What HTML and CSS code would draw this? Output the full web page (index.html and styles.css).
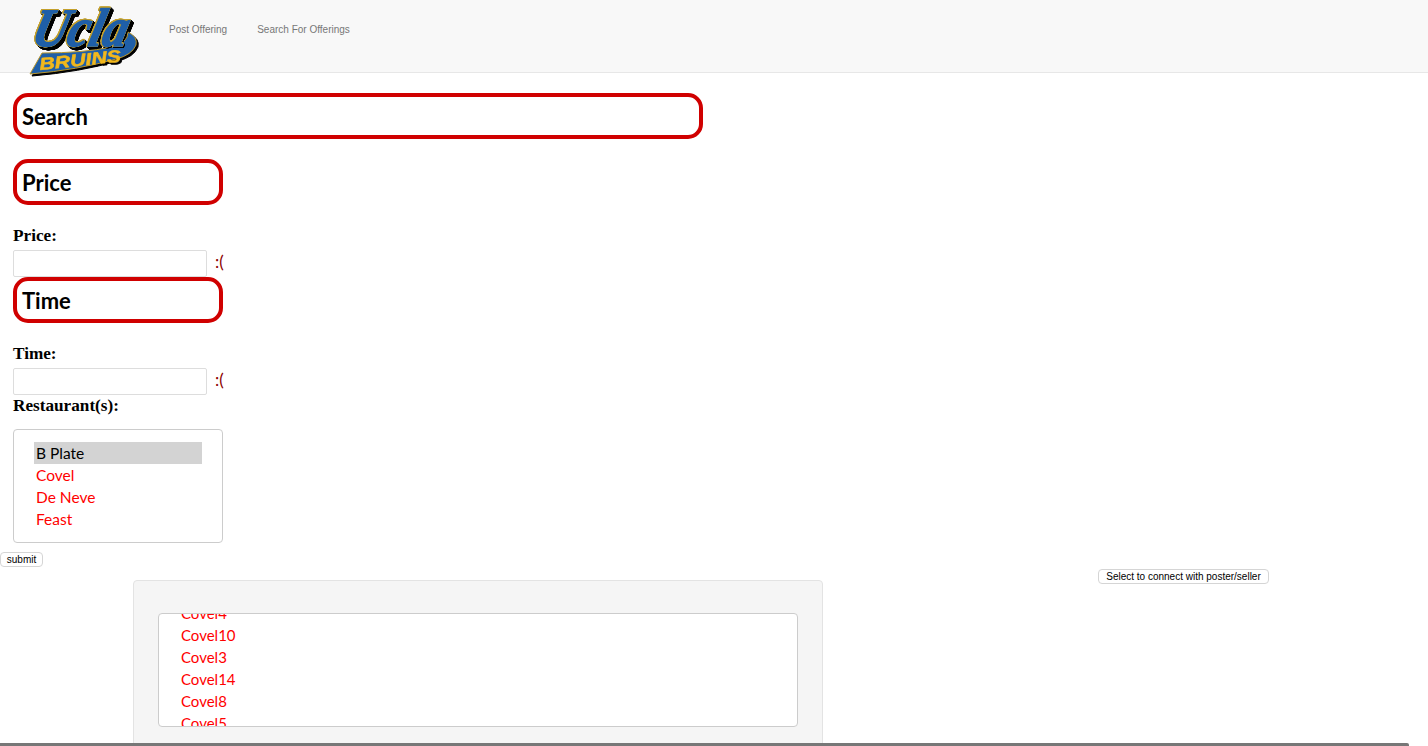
FILE: index.html
```html
<!DOCTYPE html>
<html lang="en">
<head>
<meta charset="utf-8">
<title>Search For Offerings</title>
<link rel="stylesheet" href="styles.css">
</head>
<body>
<nav class="navbar">
  <svg class="logo" viewBox="0 0 112 72" width="112" height="72" aria-label="UCLA Bruins logo">
    <g class="logo-group">
      <path class="swoosh" d="M2 69 L14 48 Q55 48 84 42 Q100 38 100 27 Q110 32 108 40 Q104 50 88 54 Q50 65 2 69 Z"/>
      <text class="logo-bruins" x="12" y="65" transform="rotate(-6 12 65)" textLength="82" lengthAdjust="spacingAndGlyphs">BRUINS</text>
      <g class="logo-script-group">
        <text class="logo-script" x="12" y="41" transform="skewX(-14)" textLength="95" lengthAdjust="spacingAndGlyphs">Ucla</text>
      </g>
    </g>
  </svg>
  <a class="nav-link" href="#">Post Offering</a>
  <a class="nav-link" href="#">Search For Offerings</a>
</nav>

<main class="content">
  <h2 class="title-box title-wide">Search</h2>
  <h3 class="title-box title-narrow">Price</h3>
  <label class="field-label label-price">Price:</label>
  <div class="field-row">
    <input class="text-input" type="text">
    <span class="sad">:(</span>
  </div>
  <h3 class="title-box title-narrow title-time">Time</h3>
  <label class="field-label label-price">Time:</label>
  <div class="field-row">
    <input class="text-input" type="text">
    <span class="sad">:(</span>
  </div>
  <label class="field-label label-rest">Restaurant(s):</label>
  <ul class="list-box restaurants">
    <li class="selected">B Plate</li>
    <li>Covel</li>
    <li>De Neve</li>
    <li>Feast</li>
  </ul>
</main>
<button class="btn btn-submit" type="button">submit</button>

<section class="results">
  <div class="panel">
    <div class="list-box offerings">
      <ul class="offerings-list">
        <li>Covel4</li>
        <li>Covel10</li>
        <li>Covel3</li>
        <li>Covel14</li>
        <li>Covel8</li>
        <li>Covel5</li>
      </ul>
    </div>
  </div>
  <button class="btn btn-connect" type="button">Select to connect with poster/seller</button>
</section>
<div class="h-scrollbar"></div>
</body>
</html>
```
FILE: styles.css
```css
* { box-sizing: border-box; }
html, body { height: 746px; overflow: hidden; }
body {
  margin: 0;
  background: #fff;
  color: #000;
  font-family: "Liberation Serif", "Times New Roman", serif;
}
.navbar {
  display: flex;
  align-items: flex-start;
  height: 73px;
  padding-left: 28px;
  background: #f8f8f8;
  border-bottom: 1px solid #e7e7e7;
}
.logo {
  flex: none;
  margin-top: 5px;
  margin-right: 29px;
  overflow: visible;
}
.logo-group { filter: drop-shadow(2px 2px 0 #000); }
.logo-script-group {
  filter: drop-shadow(0.8px 0 0 #c4a02c) drop-shadow(-0.8px 0 0 #c4a02c) drop-shadow(0 0.8px 0 #c4a02c) drop-shadow(0 -0.8px 0 #c4a02c) drop-shadow(1.5px 1.5px 0 #000);
}
.swoosh { fill: #1f5fa8; stroke: #b8962e; stroke-width: 1; }
.logo-script {
  font-family: "Liberation Serif", serif;
  font-style: italic;
  font-weight: 700;
  font-size: 54px;
  fill: #1f5fa8;
  stroke: #1f5fa8;
  stroke-width: 1.5;
}
.logo-bruins {
  font-family: "Liberation Sans", sans-serif;
  font-style: italic;
  font-weight: 700;
  font-size: 17px;
  fill: #f2b81c;
  stroke: #f2b81c;
  stroke-width: 0.5;
}
.nav-link {
  margin-top: 23px;
  margin-right: 30px;
  font: 10px/14px "Liberation Sans", Arial, sans-serif;
  color: #777;
  text-decoration: none;
}
.content {
  padding: 20px 0 0 13px;
}
.title-box {
  display: flex;
  align-items: center;
  height: 46px;
  margin: 0;
  padding-left: 5px;
  border: 4px solid #d00000;
  border-radius: 15px;
  font-family: "Lato", "Noto Sans", sans-serif;
  font-weight: 700;
  font-size: 22px;
  color: #000;
}
.title-wide { width: 690px; margin-bottom: 20px; }
.title-narrow { width: 210px; }
.field-label {
  display: block;
  font-weight: 700;
  font-size: 17.2px;
  line-height: 20px;
}
.label-price { margin-top: 21px; margin-bottom: 4px; }
.label-rest { margin-top: 1px; }
.field-row {
  display: flex;
  align-items: center;
  height: 27px;
}
.text-input {
  width: 194px;
  height: 27px;
  padding: 0 6px;
  background: #fff;
  border: 1px solid #ddd;
  border-radius: 2px;
}
.sad {
  margin-left: 8px;
  padding-bottom: 4px;
  font-family: "Lato", "Noto Sans", sans-serif;
  font-size: 17px;
  font-weight: 400;
  color: #8b0000;
}
.list-box {
  background: #fff;
  border: 1px solid #ccc;
  border-radius: 4px;
  font-family: "Lato", "Noto Sans", sans-serif;
  font-size: 15.5px;
  color: #f00;
}
.list-box ul, ul.list-box { list-style: none; margin: 0; }
.restaurants {
  width: 210px;
  height: 114px;
  padding: 12px 20px 0;
}
ul.restaurants { margin-top: 13px; }
.restaurants li, .offerings-list li {
  height: 22px;
  line-height: 22px;
  padding-left: 2px;
  white-space: nowrap;
}
.restaurants .selected {
  background: #d3d3d3;
  color: #000;
}
.btn {
  display: block;
  height: 15px;
  padding: 0;
  background: #fff;
  border: 1px solid #d5d5d5;
  border-radius: 4px;
  font: 10px/13px "Liberation Sans", Arial, sans-serif;
  white-space: nowrap;
  color: #000;
}
.btn-submit { width: 43px; margin-top: 9px; }
.results {
  display: flex;
  align-items: flex-start;
  padding-left: 133px;
  margin-top: 13px;
}
.panel {
  flex: none;
  width: 690px;
  height: 200px;
  padding: 32px 24px 0;
  background: #f5f5f5;
  border: 1px solid #e3e3e3;
  border-radius: 4px;
}
.offerings {
  height: 114px;
  overflow: hidden;
  font-size: 15px;
}
.list-box .offerings-list {
  margin: -12px 0 0;
  padding: 0 0 0 20px;
}
.btn-connect {
  width: 171px;
  margin-left: 275px;
  margin-top: -11px;
}
.h-scrollbar {
  position: fixed;
  left: 0;
  bottom: 0;
  width: 1409px;
  height: 3px;
  background: #777;
  border-radius: 0 2px 0 0;
}
```
